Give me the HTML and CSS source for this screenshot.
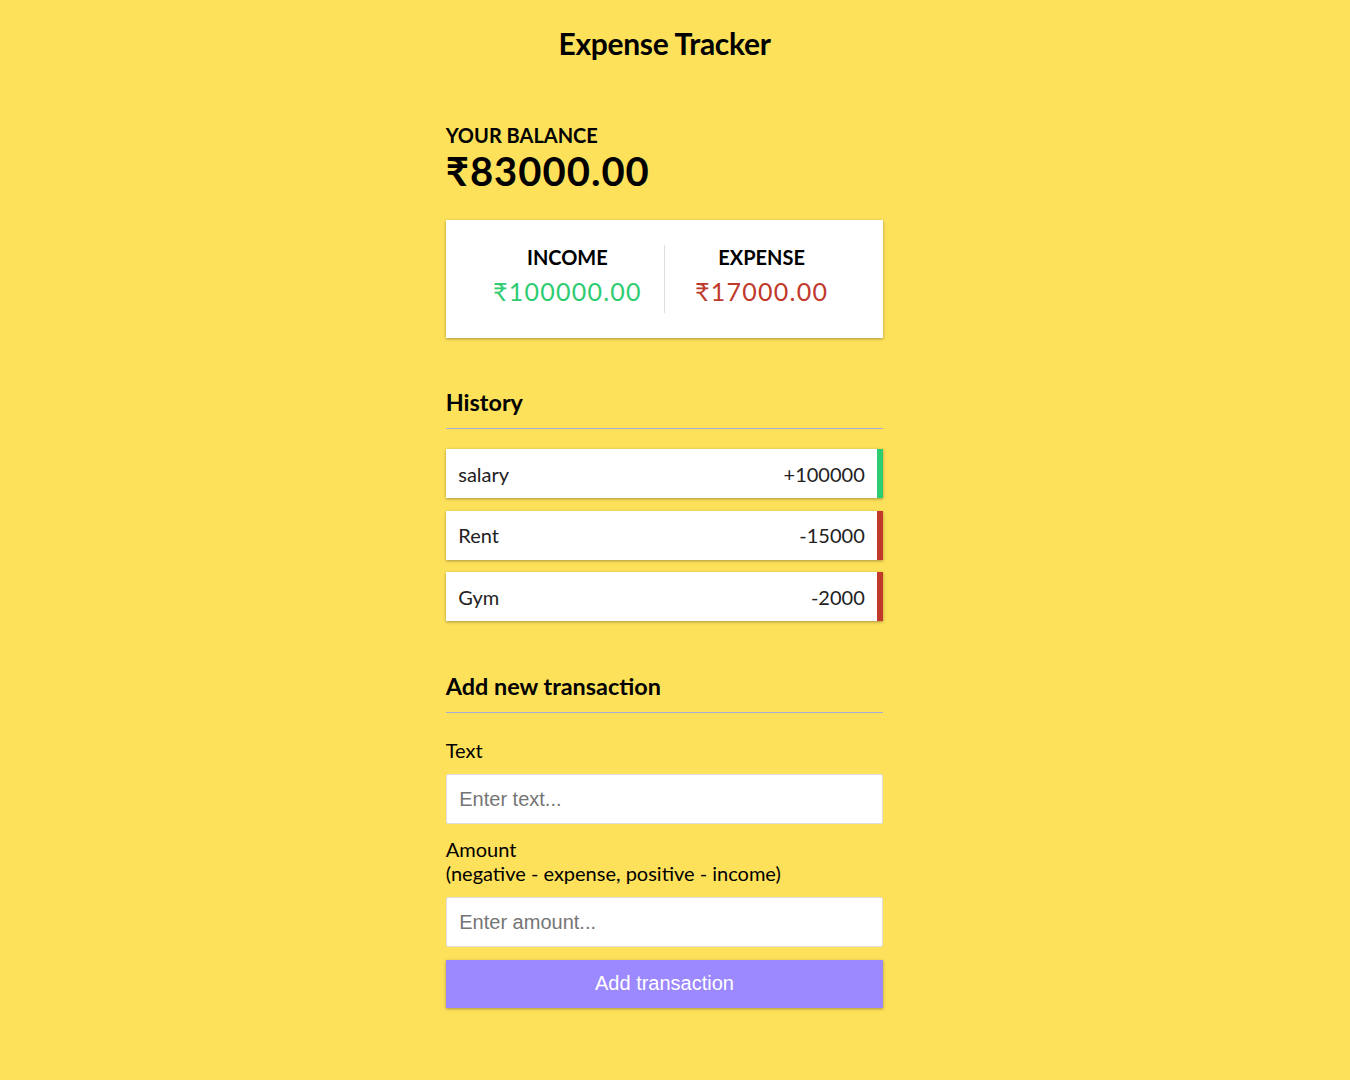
FILE: index.html
```html
<!DOCTYPE html>
<html lang="en">
<head>
<meta charset="UTF-8">
<title>Expense Tracker</title>
<link rel="stylesheet" href="styles.css">
</head>
<body>
  <h2 class="title">Expense Tracker</h2>
  <div class="container">
    <h4 class="label-up">Your Balance</h4>
    <h1 class="balance">₹83000.00</h1>

    <div class="inc-exp-container">
      <div class="inc-col">
        <h4 class="label-up">Income</h4>
        <p class="money plus">₹100000.00</p>
      </div>
      <div class="inc-col">
        <h4 class="label-up">Expense</h4>
        <p class="money minus">₹17000.00</p>
      </div>
    </div>

    <h3 class="section">History</h3>
    <ul class="list">
      <li class="item plus">salary <span>+100000</span></li>
      <li class="item minus">Rent <span>-15000</span></li>
      <li class="item minus">Gym <span>-2000</span></li>
    </ul>

    <h3 class="section">Add new transaction</h3>
    <form class="form">
      <div class="form-control">
        <label class="field-label" for="text">Text</label>
        <input class="field" type="text" id="text" placeholder="Enter text...">
      </div>
      <div class="form-control">
        <label class="field-label" for="amount">Amount <br>(negative - expense, positive - income)</label>
        <input class="field" type="number" id="amount" placeholder="Enter amount...">
      </div>
      <button class="btn" type="button">Add transaction</button>
    </form>
  </div>
</body>
</html>
```

FILE: styles.css
```css
* {
  box-sizing: border-box;
}

body {
  background-color: #fde15b;
  display: flex;
  flex-direction: column;
  align-items: center;
  justify-content: center;
  min-height: 100vh;
  margin: 0;
  padding-right: 21px;
  font-family: Lato, "Noto Sans", sans-serif;
  font-size: 20px;
  color: #000;
}

.title {
  font-size: 30px;
  font-weight: 700;
  margin: 25px 0;
  line-height: 36px;
  letter-spacing: -0.3px;
}

.container {
  margin: 37px auto 37.5px;
  width: 437.5px;
}

.label-up {
  margin: 0;
  font-size: 20px;
  font-weight: 700;
  text-transform: uppercase;
  line-height: 24px;
}

.balance {
  margin: 0;
  font-size: 40px;
  font-weight: 700;
  letter-spacing: 1px;
  line-height: 48px;
}

.inc-exp-container {
  background-color: #fff;
  box-shadow: 0 1.25px 3.75px rgba(0, 0, 0, 0.12), 0 1.25px 2.5px rgba(0, 0, 0, 0.24);
  padding: 25px;
  display: flex;
  justify-content: space-between;
  margin: 25px 0;
}

.inc-col {
  flex: 1;
  text-align: center;
}

.inc-col:first-of-type {
  border-right: 1px solid #dedede;
}

.money {
  font-size: 25px;
  letter-spacing: 1.25px;
  margin: 7px 0;
  line-height: 30px;
}

.money.plus {
  color: #2ecc71;
}

.money.minus {
  color: #c0392b;
}

.section {
  font-size: 23.4px;
  font-weight: 700;
  line-height: 28px;
  border-bottom: 1px solid #a3aed6;
  padding-bottom: 12px;
  margin: 50px 0 12px;
}

.list {
  list-style-type: none;
  padding: 0;
  margin: 20px 0 51px;
}

.item {
  background-color: #fff;
  box-shadow: 0 1.25px 3.75px rgba(0, 0, 0, 0.12), 0 1.25px 2.5px rgba(0, 0, 0, 0.24);
  color: #222;
  display: flex;
  justify-content: space-between;
  padding: 12.5px;
  margin: 12.5px 0;
  line-height: 24px;
}

.item.plus {
  border-right: 6.25px solid #2ecc71;
}

.item.minus {
  border-right: 6.25px solid #c0392b;
}

.form {
  margin: 0;
}

.field-label {
  display: inline-block;
  margin: 12.5px 0;
  line-height: 24px;
}

.field {
  border: 1px solid #dedede;
  border-radius: 2px;
  display: block;
  font-family: "Liberation Sans", Arial, sans-serif;
  font-size: 20px;
  padding: 12.5px;
  width: 100%;
  background: #fff;
}

.field::placeholder {
  color: #757575;
}

.field::-webkit-outer-spin-button,
.field::-webkit-inner-spin-button {
  -webkit-appearance: none;
  margin: 0;
}

.btn {
  cursor: pointer;
  background-color: #9c88ff;
  box-shadow: 0 1.25px 3.75px rgba(0, 0, 0, 0.12), 0 1.25px 2.5px rgba(0, 0, 0, 0.24);
  color: #fff;
  border: 0;
  display: block;
  font-family: "Liberation Sans", Arial, sans-serif;
  font-size: 20px;
  margin: 12.5px 0 37.5px;
  padding: 12.5px;
  width: 100%;
}
```
